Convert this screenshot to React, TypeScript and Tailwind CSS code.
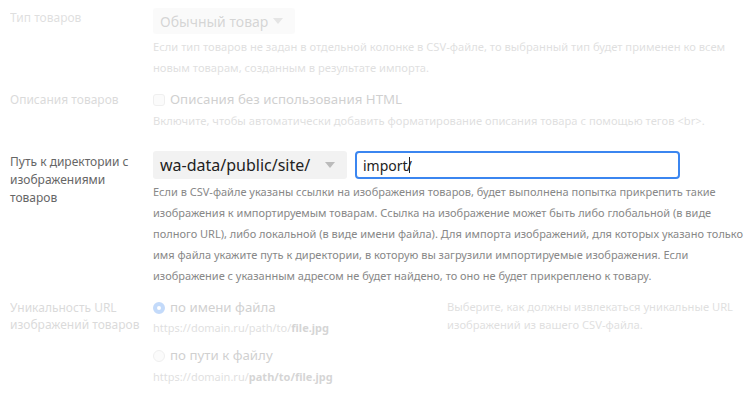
import React from 'react';

const font = { fontFamily: '"Noto Sans", "Open Sans", sans-serif' };

function Caret({ className = '' }: { className?: string }) {
  return (
    <svg viewBox="0 0 10 6" className={`w-[10px] h-[6px] ${className}`}>
      <path d="M0 0 L10 0 L5 6 Z" fill="currentColor" />
    </svg>
  );
}

export default function App() {
  return (
    <div className="w-[752px] h-[394px] bg-white overflow-hidden pl-[10px] text-[12px]" style={font}>
      {/* Тип товаров (faded) */}
      <div className="grid grid-cols-[143px_1fr] pt-[8px] opacity-30">
        <div className="text-[#999] leading-[20px]">Тип товаров</div>
        <div>
          <div className="inline-flex items-center justify-between w-[142px] h-[26px] pl-[7px] pr-[12px] bg-[#f1f1f1] rounded-[3px] text-[14px] text-[#777]">
            Обычный товар
            <Caret className="text-[#aaa]" />
          </div>
          <p className="mt-[2px] text-[11.2px] leading-[21px] text-[#999] w-[590px]">
            Если тип товаров не задан в отдельной колонке в CSV-файле, то выбранный тип будет применен ко всем новым товарам, созданным в результате импорта.
          </p>
        </div>
      </div>

      {/* Описания товаров (faded) */}
      <div className="grid grid-cols-[143px_1fr] mt-[12px] opacity-30">
        <div className="text-[#888] leading-[20px]">Описания товаров</div>
        <div>
          <label className="flex items-center gap-[5px] h-[20px] text-[13.3px] text-[#666]">
            <span className="w-[12px] h-[12px] rounded-[3px] border border-[#ccc] bg-[#f3f3f3]" />
            Описания без использования HTML
          </label>
          <p className="text-[11.2px] leading-[21px] text-[#999]">
            Включите, чтобы автоматически добавить форматирование описания товара с помощью тегов &lt;br&gt;.
          </p>
        </div>
      </div>

      {/* Путь к директории */}
      <div className="grid grid-cols-[143px_1fr] mt-[20px]">
        <div className="text-[#666] leading-[18px] pt-[2px] pr-[10px]">Путь к директории с изображениями товаров</div>
        <div>
          <div className="flex items-center gap-[8px]">
            <div className="flex items-center justify-between w-[194px] h-[28px] pl-[7px] pr-[12px] bg-[#f2f2f2] rounded-[3px] text-[16px] text-[#222]">
              wa-data/public/site/
              <Caret className="text-[#bbb]" />
            </div>
            <div className="flex items-center w-[325px] h-[28px] px-[6px] border-2 border-[#3b86f0] rounded-[4px] text-[14px] text-[#222]">
              import
              <span className="inline-block w-px h-[16px] bg-[#222] ml-px -mr-[3px]" />
              /
            </div>
          </div>
          <p className="mt-[2px] text-[11px] leading-[21px] text-[#888] w-[598px]">
            Если в CSV-файле указаны ссылки на изображения товаров, будет выполнена попытка прикрепить такие изображения к импортируемым товарам. Ссылка на изображение может быть либо глобальной (в виде полного URL), либо локальной (в виде имени файла). Для импорта изображений, для которых указано только имя файла укажите путь к директории, в которую вы загрузили импортируемые изображения. Если изображение с указанным адресом не будет найдено, то оно не будет прикреплено к товару.
          </p>
        </div>
      </div>

      {/* Уникальность URL (faded) */}
      <div className="grid grid-cols-[143px_294px_1fr] mt-[12px] opacity-30">
        <div className="text-[#888] leading-[17px] pt-[1px]">Уникальность URL изображений товаров</div>
        <div>
          <label className="flex items-center gap-[5px] h-[20px] text-[13.3px] text-[#666]">
            <span className="w-[12px] h-[12px] rounded-full border-[4px] border-[#3b86f0] bg-white" />
            по имени файла
          </label>
          <div className="text-[11px] leading-[19px] text-[#999]">
            https://domain.ru/path/to/<b className="text-[#777]">file.jpg</b>
          </div>
          <label className="flex items-center gap-[5px] h-[20px] mt-[9px] text-[13.3px] text-[#666]">
            <span className="w-[12px] h-[12px] rounded-full border border-[#ccc] bg-[#f3f3f3]" />
            по пути к файлу
          </label>
          <div className="text-[11px] leading-[21px] text-[#999]">
            https://domain.ru/<b className="text-[#777]">path/to/file.jpg</b>
          </div>
        </div>
        <p className="text-[11.2px] leading-[18px] text-[#999] pr-[10px]">
          Выберите, как должны извлекаться уникальные URL изображений из вашего CSV-файла.
        </p>
      </div>
    </div>
  );
}
